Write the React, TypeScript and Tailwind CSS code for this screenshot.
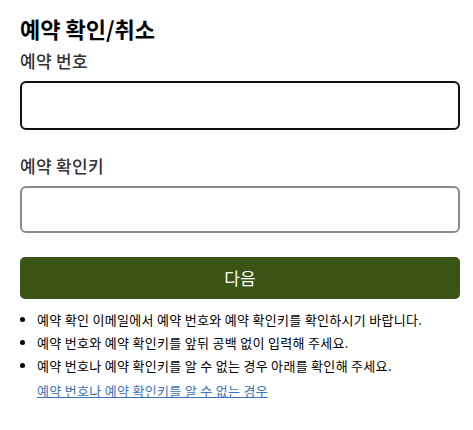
import React from 'react';

const notes = [
  '예약 확인 이메일에서 예약 번호와 예약 확인키를 확인하시기 바랍니다.',
  '예약 번호와 예약 확인키를 앞뒤 공백 없이 입력해 주세요.',
  '예약 번호나 예약 확인키를 알 수 없는 경우 아래를 확인해 주세요.',
];

const App = () => {
  return (
    <div
      className="w-[473px] h-[430px] bg-white px-5 pt-[14px] text-[#222]"
      style={{ fontFamily: '"Noto Sans CJK KR", "Noto Sans", sans-serif' }}
    >
      {/* Title */}
      <h1 className="text-[22px] font-bold leading-[28px] text-black">예약 확인/취소</h1>

      {/* Reservation number */}
      <label className="block mt-[7px] text-[17px] font-medium leading-[24px] tracking-[0.3px] text-[#333]">예약 번호</label>
      <input
        type="text"
        className="block mt-[8px] w-[440px] h-[49px] rounded-[6px] border-2 border-[#111] px-3 outline-none"
      />

      {/* Confirmation key */}
      <label className="block mt-[24px] text-[17px] font-medium leading-[24px] tracking-[0.3px] text-[#333]">예약 확인키</label>
      <input
        type="text"
        className="block mt-[8px] w-[440px] h-[47px] rounded-[6px] border-2 border-[#8c8c8c] px-3 outline-none"
      />

      {/* Next button */}
      <button className="mt-[24px] w-[440px] h-[42px] rounded-[5px] bg-[#3a5416] text-white text-[17px] leading-[24px]">
        다음
      </button>

      {/* Notes */}
      <ul className="mt-[13px] list-disc pl-[17px] text-[13px] leading-[16px] tracking-[0.3px] text-black space-y-[7px]">
        {notes.map((n, i) => (
          <li key={i}>{n}</li>
        ))}
      </ul>
      <a href="#" className="inline-block mt-[9px] ml-[17px] text-[13px] leading-[16px] tracking-[0.3px] text-[#3b73b9] underline">
        예약 번호나 예약 확인키를 알 수 없는 경우
      </a>
    </div>
  );
};

export default App;
